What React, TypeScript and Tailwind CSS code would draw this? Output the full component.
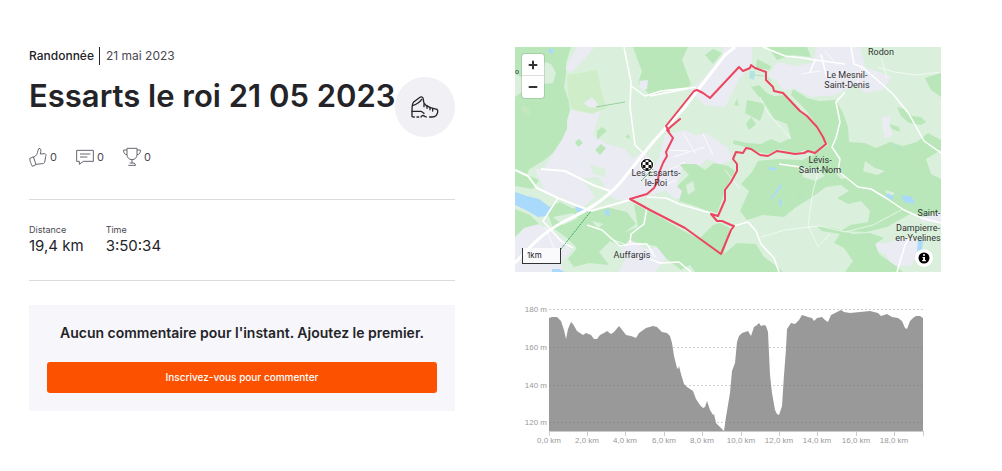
import React, { useState } from 'react';

const stats = [
  { label: 'Distance', value: '19,4 km' },
  { label: 'Time', value: '3:50:34' },
];

const yTicks = [
  { label: '180 m', y: 14 },
  { label: '160 m', y: 52 },
  { label: '140 m', y: 90 },
  { label: '120 m', y: 127 },
];

const xTicks = [
  { label: '0,0 km', x: 34 },
  { label: '2,0 km', x: 72 },
  { label: '4,0 km', x: 110 },
  { label: '6,0 km', x: 149 },
  { label: '8,0 km', x: 187 },
  { label: '10,0 km', x: 226 },
  { label: '12,0 km', x: 264 },
  { label: '14,0 km', x: 302 },
  { label: '16,0 km', x: 341 },
  { label: '18,0 km', x: 379 },
];

const places = [
  { lines: ['Rodon'], x: 366, y: 8 },
  { lines: ['Le Mesnil-', 'Saint-Denis'], x: 332, y: 31 },
  { lines: ['Lévis-', 'Saint-Nom'], x: 305, y: 116 },
  { lines: ['Les Essarts-', 'le-Roi'], x: 141, y: 129 },
  { lines: ['Auffargis'], x: 117, y: 211 },
  { lines: ['Saint-'], x: 414, y: 169 },
  { lines: ['Dampierre-', 'en-Yvelines'], x: 403, y: 184 },
];

const ThumbIcon: React.FC = () => (
  <svg width="18" height="20" viewBox="0 0 54 60" fill="none" stroke="#666670" strokeWidth="3" strokeLinejoin="round">
    <path d="M2 35 L13 29 L21 53 L10 58 C6 50 3 44 2 35 Z" />
    <path d="M14 31 C22 26 26 20 27 10 L30 4 C36 4 37 10 34 21 L46 20 C51 20 52 24 50 29 L47 46 C46 49 43 50 39 50 L21 52" />
  </svg>
);

const CommentIcon: React.FC = () => (
  <svg width="18" height="18" viewBox="0 0 54 54" fill="none" stroke="#666670" strokeWidth="3">
    <path d="M2 7 H52 V40 H22 L10 49 V40 H2 Z" />
    <path d="M12 18 H43 M12 27 H34" />
  </svg>
);

const TrophyIcon: React.FC = () => (
  <svg width="18" height="20" viewBox="0 0 54 60" fill="none" stroke="#666670" strokeWidth="3" strokeLinejoin="round">
    <path d="M12 4 H42 V22 C42 32 36 38 27 38 C18 38 12 32 12 22 Z" />
    <path d="M12 9 H2 V13 C2 18 6 23 12 23 M42 9 H52 V13 C52 18 48 23 42 23" />
    <path d="M27 38 V48 M20 48 H34 M16 55 H38 L34 48" />
  </svg>
);

const ShoeIcon: React.FC = () => (
  <svg width="28" height="24" viewBox="0 0 84 72" fill="none" stroke="#242428" strokeWidth="4" strokeLinecap="round" strokeLinejoin="round">
    <path d="M3 49 V64 C4 66 7 66 10 66 M3 49 C3 37 3 25 8 21 L25 8 C29 5 34 5 36 9 L39 25 L45 31 L58 38 L78 43 C82 47 80 56 76 61 C73 65 68 66 62 66 H56" />
    <path d="M7 31 C18 27 26 22 32 13 M3 49 H29 C34 49 35 53 39 55 M18 66 H23 M30 66 C32 61 37 60 41 64 L46 66 M39 28 V35 M48 32 V40 M57 37 V44 M65 41 V48" />
  </svg>
);

const FinishIcon: React.FC = () => (
  <g>
    <clipPath id="finish">
      <circle cx="132" cy="118" r="6" />
    </clipPath>
    <circle cx="132" cy="118" r="7" fill="#fff" />
    <g clipPath="url(#finish)">
      <rect x="126" y="112" width="12" height="12" fill="#fff" />
      <path
        d="M127.5 112h3v3h-3z M133.5 112h3v3h-3z M124.5 115h3v3h-3z M130.5 115h3v3h-3z M136.5 115h3v3h-3z M127.5 118h3v3h-3z M133.5 118h3v3h-3z M130.5 121h3v3h-3z"
        fill="#111"
      />
    </g>
    <circle cx="132" cy="118" r="5.5" fill="none" stroke="#111" />
  </g>
);

const RouteMap: React.FC = () => (
  <svg className="block h-full w-full" viewBox="0 0 426 225" preserveAspectRatio="xMidYMid slice" role="img" aria-label="Parcours">
    <rect width="426" height="225" fill="#daf0dc" />

    {/* Villages and farmland */}
    <g fill="#ebebf3">
      <path d="M55 63 L72 66 L86 62 L78 88 L92 97 L110 102 L118 112 L128 104 L136 112 L132 150 L110 155 L96 150 L84 130 L60 132 L44 128 L30 120 L38 106 L50 86 Z" />
      <path d="M20 122 L50 122 L72 138 L80 150 L68 160 L45 150 L30 145 Z" />
      <path d="M62 0 H80 L70 11 L56 25 L50 22 Z" />
      <path d="M208 0 H237 V17 L224 32 L216 48 L210 60 L190 58 L175 44 L186 34 L208 8 Z" />
      <path d="M150 88 L170 83 L180 88 L190 86 L212 100 L218 112 L205 118 L192 112 L178 125 L168 120 L162 140 L175 149 L160 152 L150 143 L138 148 L128 140 L136 128 L145 108 Z" />
      <path d="M252 28 L263 15 L280 19 L298 16 L302 0 L345 0 L350 20 L377 30 L367 43 L350 46 L341 38 L320 48 L296 50 L280 42 L268 43 L262 34 Z" />
      <path d="M0 178 L20 176 L34 182 L50 194 L56 204 L46 216 L48 225 H0 Z" />
      <path d="M105 198 L116 192 L130 202 L145 200 L150 212 L140 225 H104 L110 212 Z" />
      <path d="M361 195 L370 197 L380 193 L398 191 L407 200 L396 219 H375 L372 208 L362 203 Z" />
      <path d="M367 70 L376 69 L374 79 L378 88 L370 92 L368 82 Z M401 164 L415 159 L426 162 V176 L407 175 Z" />
    </g>

    {/* Forests */}
    <g fill="#b9e7ba">
      <path d="M0 0 H56 L51 16 L51 27 L49 40 L54 55 L55 63 L52 73 L52 82 L46 94 L38 106 L28 114 L13 123 L7 116 L0 114 Z" />
      <path d="M118 0 H173 L167 13 L176 37 L171 42 L155 42 L135 49 L129 41 L123 36 L127 24 L123 14 Z" />
      <path d="M236 40 L244 38 L252 46 L259 49 L270 48 L284 62 L292 69 L302 82 L309 93 L309 100 L300 105 L290 103 L280 106 L264 102 L253 107 L243 105 L230 100 L218 97 L219 93 L232 96 L246 97 L256 92 L265 96 L276 91 L272 77 L259 72 L250 57 Z" />
      <path d="M278 42 L292 51 L304 54 L321 53 L328 66 L333 80 L334 95 L350 96 L361 101 L375 95 L388 99 L402 95 L413 86 L426 93 V103 L411 112 L416 127 L426 132 V165 L407 170 L397 166 L372 180 L351 185 L326 184 L335 178 L353 175 L355 164 L346 154 L333 157 L322 151 L334 144 L326 138 L311 140 L296 151 L281 160 L269 170 L248 168 L232 173 L225 164 L234 144 L226 137 L237 125 L243 114 L262 112 L287 113 L300 107 L313 98 L303 80 L290 62 L276 48 Z" />
      <path d="M164 117 L181 117 L190 123 L199 116 L213 119 L220 124 L213 137 L208 150 L202 166 L190 163 L177 158 L164 154 L167 144 L162 139 L174 128 Z" />
      <path d="M119 157 L136 165 L167 183 L184 192 L198 178 L205 176 L215 181 L209 207 L222 196 L241 197 L249 210 L259 217 L268 225 H180 L175 218 L166 223 L152 212 L141 199 L119 195 L105 187 L123 180 Z" />
      <path d="M31 161 L45 155 L57 161 L78 164 L91 160 L112 165 L121 177 L110 185 L117 190 L108 200 L95 194 L84 205 L94 218 L74 216 L59 220 L53 212 L62 201 L52 191 L38 181 Z" />
      <path d="M302 179 L318 181 L338 187 L355 186 L369 191 L360 197 L364 207 L381 219 L388 225 H330 L338 214 L329 201 L319 196 L325 187 L307 184 Z" />
      <path d="M0 112 H18 L12 128 L24 133 L18 142 L0 139 Z M0 162 L15 168 L24 177 L9 181 L0 190 Z" />
      <path d="M410 31 L426 26 V50 L416 43 Z M382 60 L389 62 L397 69 L406 70 L411 75 L406 78 L394 76 L386 69 Z M375 77 L384 80 L385 85 L377 82 Z" />
      <path d="M82 84 L87 80 L92 84 L86 89 L82 93 Z M80 103 L86 97 L91 101 L85 108 Z M110 90 L114 87 L115 92 Z M60 95 L64 92 L68 96 L63 100 Z M242 12 L256 19 L255 23 L241 21 Z M232 53 L251 57 L245 74 L230 66 Z M231 77 L236 70 L241 77 L234 83 Z M219 58 L222 52 L224 59 Z" />
      <path d="M134 0 L171 0 L166 6 L148 4 Z M253 0 H292 L296 10 L277 8 L262 13 Z M190 8 L198 2 L207 6 L198 17 Z" />
    </g>

    {/* Clearings */}
    <g fill="#daf0dc">
      <path d="M30 15 L36 17 L41 26 L38 36 L30 37 L25 30 Z M0 27 L8 31 L7 45 L0 50 Z M75 117 L90 122 L91 130 L78 127 Z M38 170 L58 166 L63 171 L48 178 Z" />
      <path d="M285 120 L302 122 L310 129 L300 134 L288 130 Z M350 114 L360 121 L370 124 L362 128 L348 124 Z M319 124 L332 131 L326 132 Z M370 143 L380 146 L374 151 Z" />
      <path d="M171 138 L178 134 L180 143 L173 148 Z M77 174 L88 177 L83 181 Z" />
    </g>
    <path d="M52 28 L82 23 L87 47 L92 61 L77 67 L57 62 L53 48 Z" fill="#d0edc9" />
    <path d="M8 58 L14 62 L15 68 L6 64 Z" fill="#c5e7bb" />
    <path d="M69 56 L77 50 L83 57 L81 61 L73 60 Z M124 34 L133 33 L132 42 L126 43 Z" fill="#ebebf3" />
    <path d="M110 55 L81 60" stroke="#9ccf9f" strokeWidth="1" />

    {/* Lakes and streams */}
    <g fill="#a9dafb">
      <path d="M0 145 L12 149 L24 152 L36 161 L32 169 L23 170 L11 163 L0 158 Z" />
      <path d="M60 160 L68 160 L73 165 L62 165 Z M90 163 L94 162 L95 169 L90 168 Z M37 222 L44 222 L50 225 H37 Z" />
      <path d="M386 148 L397 150 L400 157 L389 155 Z M373 146 L379 150 L377 153 L371 149 Z M403 193 L408 193 L407 203 L402 205 Z M254 120 L262 121 L261 123 L254 123 Z M264 152 L267 153 L266 160 L264 158 Z" />
      <path d="M255 152 L266 137 L267 139 L257 152 Z M35 1 L39 3 L37 7 L33 5 Z" />
    </g>
    <path d="M235 24 L240 24 L239 33 L234 31 Z" fill="#b5e3e3" />
    <path d="M239 28 L250 29 L256 34 M282 145 L288 152 M376 96 L388 104" stroke="#b5dfcc" strokeWidth="1" fill="none" />

    {/* Roads */}
    <g fill="none" stroke="#fff" strokeLinejoin="round">
      <path d="M0 216 C14 201 27 186 48 175 C69 165 88 155 105 136 L138 95 L169 61 L210 8 L220 0" strokeWidth="3" />
      <path d="M0 123 L13 129 L22 141 L43 151 L76 164 M26 122 L50 124 L78 138 L95 144 M76 164 L118 152" strokeWidth="2" />
      <path d="M43 151 L28 174 L46 194 L58 201 M72 178 L87 183 L105 199 L117 197 L132 197 L140 210 M132 160 L129 177 L116 187 L115 196" strokeWidth="1.5" />
      <path d="M109 0 L116 35 L115 60 L120 98 L128 106 M116 39 L130 49 L146 44 L173 41 M135 49 L181 40" strokeWidth="1.5" />
      <path d="M132 150 L151 151 L164 157 L195 166 M219 179 L233 175 L241 184 L246 197 L259 211 L264 225 M135 212 L145 216 L164 215 L176 225 M264 117 L285 120" strokeWidth="1.5" />
      <path d="M248 0 L270 9 L288 11 L300 13 L330 17 M306 7 L312 31 M300 13 L295 25 M336 0 L339 17 L347 20 L360 31 L378 47 L394 67 L409 94 L426 106" strokeWidth="1.5" />
      <path d="M330 45 L321 55 L325 75 L321 91 L317 100 L325 112 L323 124 L343 140 L356 142 L371 151 L389 163 L407 171 L426 176 M395 190 L390 198 L382 225" strokeWidth="1.5" />
      <path d="M366 10 L372 31 M305 119 L298 144 L293 178 L303 200 L315 187 M293 180 L305 179 L330 185 L358 178 L388 162" strokeWidth="1" opacity="0.6" />
      <path d="M246 190 L270 183 L295 180 M245 50 L253 66 L276 92 M210 123 L225 142 M362 20 L379 25 L401 28 L426 25" strokeWidth="1" opacity="0.6" />
      <path d="M168 86 L181 107 M151 103 L174 104 M188 87 L198 108 M154 123 L170 115 M148 139 L161 133 M158 110 L190 100 M310 4 L322 18 M314 29 L328 25 M286 27 L305 24 M347 20 L342 36 M30 180 L39 201 M98 193 L112 198" strokeWidth="1" opacity="0.8" />
    </g>

    <path d="M46 202 L76 164 M126 134 L136 124" stroke="#36a85c" strokeWidth="1" strokeDasharray="2 1" fill="none" />

    {/* Recorded track */}
    <path
      d="M165 72 L152 83 L158 91 L151 105 L152 109 L148 116 L144 126 L143 133 L139 141 L132 147 L115 152 L135 163 L170 181 L206 207 L216 183 L219 179 L216 178 L207 174 L202 174 L196 167 L203 169 L210 153 L210 143 L216 135 L222 124 L222 117 L218 112 L221 105 L228 106 L231 101 L236 102 L245 108 L253 109 L262 104 L280 107 L289 106 L293 104 L300 106 L311 97 L308 90 L302 80 L292 69 L285 64 L268 46 L259 44 L258 40 L251 33 L251 25 L240 21 L236 18 L235 21 L228 24 L224 20 L195 51 L188 46 L182 43 L179 44 L151 79 L154 84"
      fill="none"
      stroke="#ec4560"
      strokeWidth="2"
      strokeLinejoin="round"
      strokeLinecap="round"
    />

    {places.map((place) => (
      <text
        key={place.lines[0]}
        className="font-['Roboto','Liberation_Sans',sans-serif] text-[9px]"
        textAnchor="middle"
        fill="#333"
      >
        {place.lines.map((line, i) => (
          <tspan key={line} x={place.x} y={place.y + i * 10}>{line}</tspan>
        ))}
      </text>
    ))}
    <text className="font-['Roboto','Liberation_Sans',sans-serif] text-[7px]" x="0" y="27" fill="#333">o</text>

    <FinishIcon />
  </svg>
);

const ElevationChart: React.FC = () => (
  <svg className="block w-full font-['Liberation_Sans',Arial,sans-serif] text-[8px]" viewBox="0 0 426 155" role="img" aria-label="Profil altimétrique">
    <path
      d="M34 136 V23 L37 22 L42 22 L46 26 L49 35 L51 44 L53 34 L56 27 L58 29 L62 36 L65 38 L68 40 L71 38 L76 40 L79 44 L82 44 L85 40 L89 38 L92 36 L96 39 L99 37 L104 31 L108 36 L111 40 L116 41 L121 43 L124 38 L131 33 L138 31 L142 32 L147 37 L152 38 L155 41 L157 48 L159 61 L162 73 L163 74 L164 71 L166 79 L169 89 L172 92 L178 96 L181 104 L185 110 L188 113 L190 112 L192 106 L195 115 L198 120 L199 119 L201 128 L206 133 L209 136 L211 122 L215 98 L217 76 L220 68 L222 47 L224 41 L227 38 L233 36 L236 41 L239 32 L242 30 L244 28 L246 31 L249 30 L251 31 L253 37 L255 80 L257 98 L260 115 L262 119 L264 120 L267 111 L269 80 L271 54 L272 34 L276 28 L280 29 L284 25 L287 20 L293 22 L297 23 L299 26 L302 23 L307 22 L310 25 L313 27 L316 20 L322 17 L326 15 L329 17 L335 18 L345 17 L355 16 L363 18 L366 21 L372 19 L377 22 L383 23 L387 26 L390 33 L392 34 L395 26 L398 23 L401 21 L405 21 L408 23 V136 Z"
      fill="#999"
    />
    {yTicks.map((tick) => (
      <g key={tick.label}>
        <path d={`M34 ${tick.y + 0.5} H408`} stroke="#777" strokeWidth="1" strokeDasharray="2 2" opacity="0.35" />
        <text x="32" y={tick.y + 3} textAnchor="end" fill="#999">{tick.label}</text>
      </g>
    ))}
    <path d="M34 136.5 H409" stroke="#ccc" />
    {xTicks.map((tick) => (
      <g key={tick.label}>
        <path d={`M${tick.x + 0.5} 136 V141`} stroke="#ccc" />
        <text x={tick.x} y="148" textAnchor="middle" fill="#999">{tick.label}</text>
      </g>
    ))}
    <path d="M408.5 136 V141" stroke="#ccc" />
  </svg>
);

const App: React.FC = () => {
  const [kudos, setKudos] = useState(0);

  return (
    <main className="grid grid-cols-2 gap-[60px] bg-white pl-[29px] pr-[61px] pt-[47px] font-['Inter','Liberation_Sans',sans-serif] text-[#242428]">
      <section className="min-w-0">
        <p className="flex items-center text-xs leading-[18px]">
          <span className="border-r border-[#242428] pr-[5px] font-medium">Randonnée</span>
          <time className="pl-[6px] text-[#494950]" dateTime="2023-05-21">21 mai 2023</time>
        </p>

        <div className="mt-3 flex items-start justify-between">
          <h1 className="min-w-0 whitespace-nowrap text-[31px] font-semibold leading-[38px]">Essarts le roi 21 05 2023</h1>
          <div className="flex h-15 w-15 shrink-0 items-center justify-center rounded-full bg-[#f0f0f5]">
            <ShoeIcon />
          </div>
        </div>

        <div className="mt-[10px] flex items-center gap-[19px] text-[11px] leading-5 text-[#494950]">
          <button className="flex cursor-pointer items-center gap-[3px]" aria-label="Kudos" onClick={() => setKudos(kudos + 1)}>
            <ThumbIcon />
            {kudos}
          </button>
          <button className="flex cursor-pointer items-center gap-[3px]" aria-label="Commentaires">
            <CommentIcon />
            0
          </button>
          <button className="flex cursor-pointer items-center gap-[3px]" aria-label="Trophées">
            <TrophyIcon />
            0
          </button>
        </div>

        {/* Stats */}
        <dl className="mt-8 flex gap-[22px] border-y border-[#dcdcdf] pb-6 pt-6">
          {stats.map((stat) => (
            <div key={stat.label}>
              <dt className="text-[9px] leading-3 text-[#494950]">{stat.label}</dt>
              <dd className="text-[15px] leading-5">{stat.value}</dd>
            </div>
          ))}
        </dl>

        <div className="mt-6 bg-[#f7f7fb] px-[18px] pb-[18px] pt-[18px] text-center">
          <h2 className="whitespace-nowrap text-sm font-semibold leading-5">Aucun commentaire pour l'instant. Ajoutez le premier.</h2>
          <a href="#register" className="mt-[19px] block rounded-[3px] bg-[#fc5200] text-[10px] font-medium leading-[31px] text-white">
            Inscrivez-vous pour commenter
          </a>
        </div>
      </section>

      <section className="min-w-0">
        <div className="relative h-[225px] overflow-hidden">
          <RouteMap />
          <div className="absolute left-[7px] top-[7px] flex w-[22px] flex-col divide-y divide-[#ddd] rounded-[3px] bg-white shadow-[0_0_0_1px_rgba(0,0,0,0.1)]">
            <button className="flex h-[22px] cursor-pointer items-center justify-center" aria-label="Zoom avant">
              <svg width="10" height="10" viewBox="0 0 10 10" stroke="#333" strokeWidth="2" strokeLinecap="round"><path d="M1.5 5 H8.5 M5 1.5 V8.5" /></svg>
            </button>
            <button className="flex h-[22px] cursor-pointer items-center justify-center" aria-label="Zoom arrière">
              <svg width="10" height="10" viewBox="0 0 10 10" stroke="#333" strokeWidth="2" strokeLinecap="round"><path d="M1.5 5 H8.5" /></svg>
            </button>
          </div>
          <div className="absolute bottom-2 left-[7px] w-[39px] border border-t-0 border-[#333] bg-white/75 pl-1 text-[8px] leading-[15px]">1km</div>
          <button className="absolute bottom-[5px] right-2 flex size-[18px] cursor-pointer items-center justify-center rounded-full bg-white" aria-label="Attribution">
            <svg width="12" height="12" viewBox="0 0 12 12">
              <circle cx="6" cy="6" r="5.5" fill="#000" />
              <circle cx="6" cy="3.1" r="1" fill="#fff" />
              <path d="M4.5 5 H7 V8 H7.8 V9.2 H4.2 V8 H5.1 V6 H4.5 Z" fill="#fff" />
            </svg>
          </button>
        </div>
        <div className="mt-[23px]">
          <ElevationChart />
        </div>
      </section>
    </main>
  );
};

export default App;
